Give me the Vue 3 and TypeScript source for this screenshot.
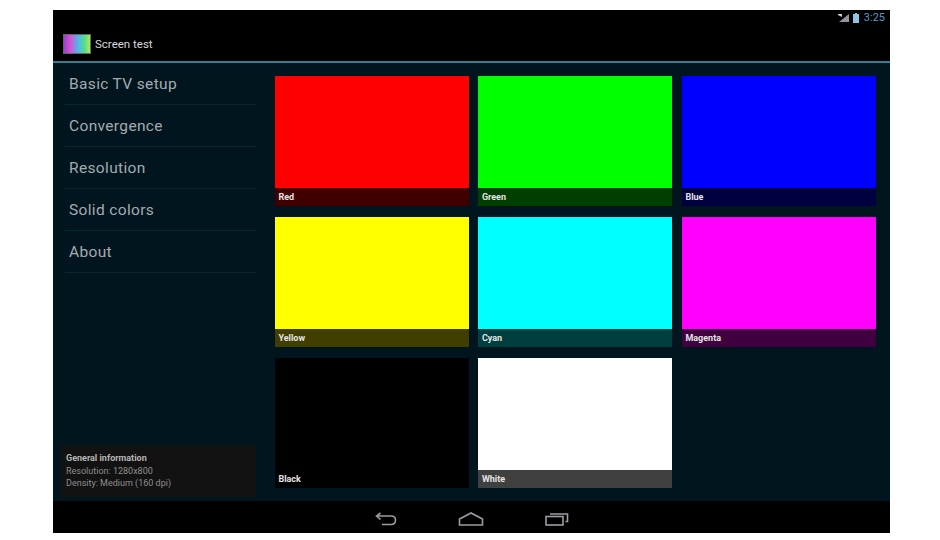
<script setup lang="ts">
const menu: string[] = ['Basic TV setup', 'Convergence', 'Resolution', 'Solid colors', 'About']
interface Tile { name: string; color: string; caption: string }
const tiles: Tile[] = [
  { name: 'Red', color: '#ff0000', caption: '#400000' },
  { name: 'Green', color: '#00ff00', caption: '#003f00' },
  { name: 'Blue', color: '#0000ff', caption: '#000040' },
  { name: 'Yellow', color: '#ffff00', caption: '#403f00' },
  { name: 'Cyan', color: '#00ffff', caption: '#003f40' },
  { name: 'Magenta', color: '#ff00ff', caption: '#40003f' },
  { name: 'Black', color: '#000000', caption: '#000000' },
  { name: 'White', color: '#ffffff', caption: '#404040' },
]
</script>

<template>
  <div class="page">
    <div class="screen">
      <header class="actionbar">
        <div class="status">
          <svg class="sig" width="12" height="10" viewBox="0 0 12 10">
            <path d="M1 9 L11 9 L11 1 Z" fill="#8f959a" />
            <path d="M0 1 L4 1 L4 4 L0 2 Z" fill="#c9cdd0" />
          </svg>
          <svg class="bat" width="6" height="10" viewBox="0 0 6 10">
            <rect x="0" y="1" width="6" height="9" fill="#8fc4e6" />
            <rect x="2" y="0" width="2" height="1" fill="#8fc4e6" />
          </svg>
          <span class="clock">3:25</span>
        </div>
        <div class="title-row">
          <span class="logo"></span>
          <span class="title">Screen test</span>
        </div>
      </header>
      <main class="content">
        <aside class="sidebar">
          <ul class="menu">
            <li v-for="item in menu" :key="item" class="menu-item">{{ item }}</li>
          </ul>
          <div class="info">
            <div class="info-head">General information</div>
            <div>Resolution: 1280x800</div>
            <div>Density: Medium (160 dpi)</div>
          </div>
        </aside>
        <section class="grid">
          <div v-for="t in tiles" :key="t.name" class="tile">
            <div class="swatch" :style="{ background: t.color }"></div>
            <div class="caption" :style="{ background: t.caption }">{{ t.name }}</div>
          </div>
        </section>
      </main>
      <footer class="navbar">
        <svg width="22" height="14" viewBox="0 0 22 14" fill="none" stroke="#9a9ea0" stroke-width="1.6">
          <path d="M5.500 1 L1.500 4 L5.500 7.500" />
          <path d="M2 4 H16 Q20.500 4 20.500 8 Q20.500 12.500 16 12.500 H7" />
        </svg>
        <svg width="26" height="14" viewBox="0 0 26 14" fill="none" stroke="#9a9ea0" stroke-width="1.6">
          <path d="M1.500 13 V7 L13 1 L24.500 7 V13 Z" />
        </svg>
        <svg width="24" height="14" viewBox="0 0 24 14" fill="none" stroke="#9a9ea0" stroke-width="1.6">
          <rect x="1" y="4.500" width="17" height="8.500" />
          <path d="M5 2 H22.500 V9.500 H20.500" />
        </svg>
      </footer>
    </div>
  </div>
</template>

<style>
html, body { margin: 0; background: #fff; }
</style>

<style scoped>
.page {
  width: 940px;
  height: 540px;
  padding: 10px 50px 7px 53px;
  box-sizing: border-box;
  background: #fff;
  font-family: Roboto, "Liberation Sans", sans-serif;
}
.screen {
  width: 837px;
  height: 523px;
  display: flex;
  flex-direction: column;
  background: #01151e;
}
.actionbar {
  height: 51px;
  flex: none;
  background: #000;
  border-bottom: 2px solid #2f7f95;
  display: flex;
  flex-direction: column;
}
.status {
  height: 15px;
  display: flex;
  justify-content: flex-end;
  align-items: center;
  gap: 3px;
  padding: 0 5px 0 0;
}
.clock { font-size: 11px; color: #4f9cc4; margin-left: 2px; }
.title-row {
  display: flex;
  align-items: center;
  gap: 4px;
  padding: 9px 0 0 10px;
}
.logo {
  width: 28px;
  height: 20px;
  border: 1px solid #666;
  box-sizing: border-box;
  background: linear-gradient(90deg, #9a3fd8, #d84fd0 22%, #4fb8e8 55%, #55e088 80%, #b8e850);
}
.title { font-size: 11.500px; color: #d6d9da; }
.content {
  flex: 1;
  display: flex;
  min-height: 0;
}
.sidebar {
  width: 221.900px;
  flex: none;
  display: flex;
  flex-direction: column;
  justify-content: space-between;
  padding: 0 0 4px 7px;
  box-sizing: border-box;
}
.menu { list-style: none; margin: 0; padding: 0; }
.menu-item {
  height: 42px;
  line-height: 42px;
  box-sizing: border-box;
  margin: 0 19px 0 5px;
  padding-left: 4px;
  border-bottom: 1px solid #0c2630;
  font-size: 15.500px;
  letter-spacing: 0.35px;
  color: #a4abb0;
}
.info {
  width: 196px;
  height: 52px;
  box-sizing: border-box;
  padding: 7px 6px;
  background: #121212;
  font-size: 9px;
  line-height: 12.500px;
  color: #8e8e8e;
}
.info-head { font-weight: 700; color: #b4b4b4; }
.grid {
  display: grid;
  grid-template-columns: repeat(3, 194px);
  grid-auto-rows: 130px;
  column-gap: 9.500px;
  row-gap: 11px;
  padding: 13px 0 0 0;
}
.tile { display: flex; flex-direction: column; }
.swatch { height: 112px; }
.caption {
  height: 18px;
  line-height: 18px;
  padding-left: 3.500px;
  font-size: 9px;
  font-weight: 700;
  color: #e4e4e4;
}
.navbar {
  height: 32px;
  flex: none;
  background: #000;
  display: flex;
  align-items: center;
  justify-content: center;
  gap: 61px;
  padding: 4px 0 0 0;
  box-sizing: border-box;
}
</style>
